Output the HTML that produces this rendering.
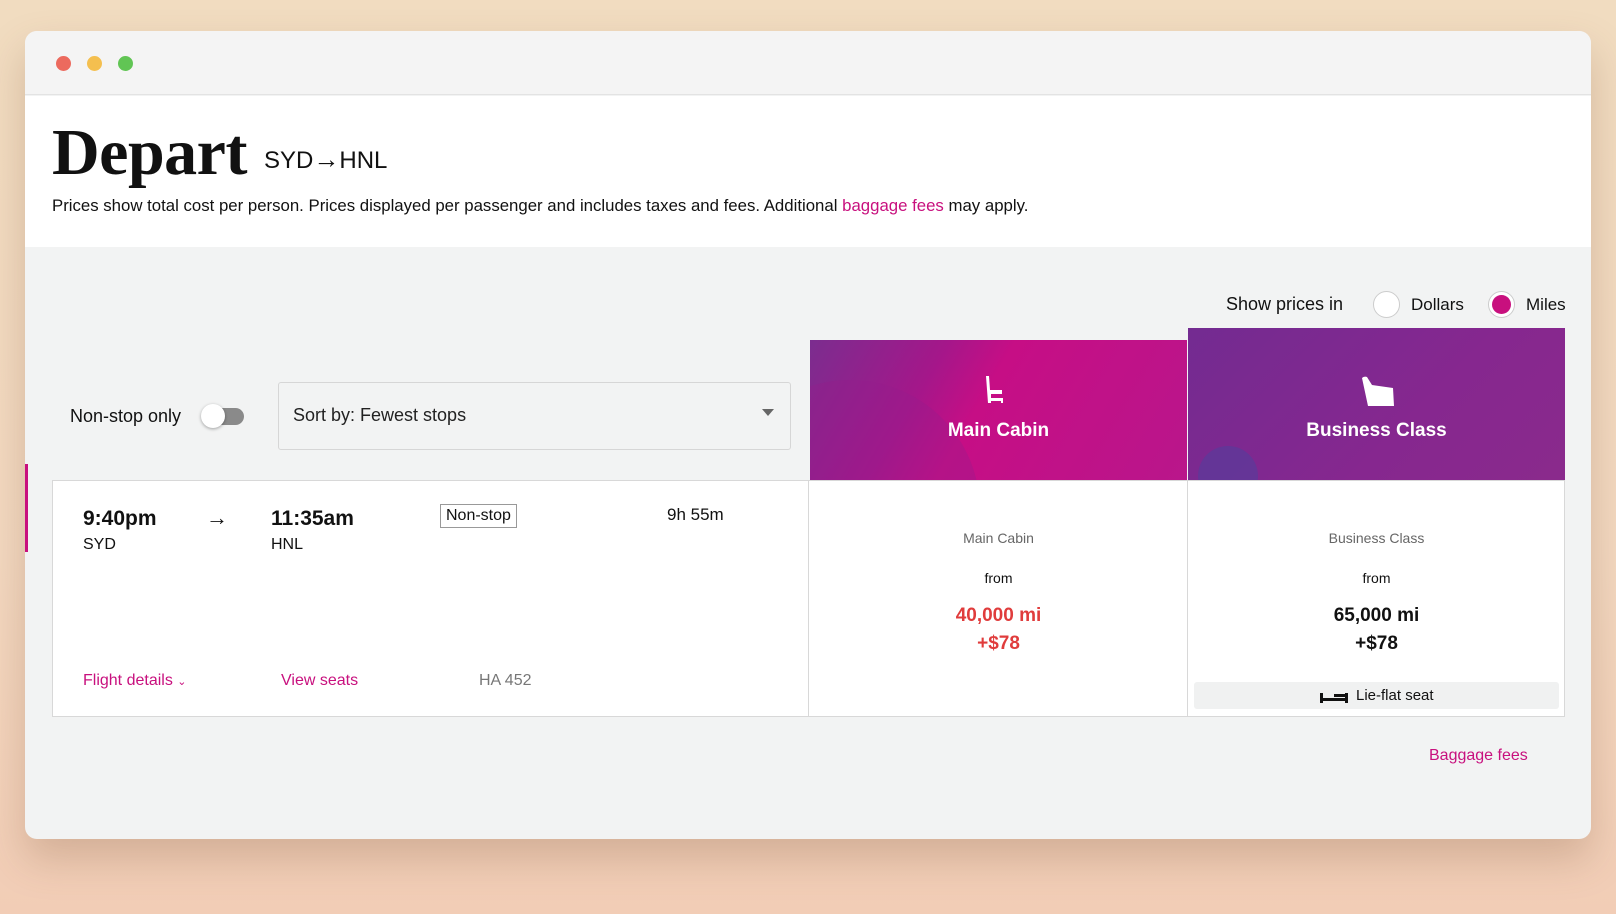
<!DOCTYPE html>
<html><head><meta charset="utf-8"><style>
*{margin:0;padding:0;box-sizing:border-box}
body{width:1616px;height:914px;overflow:hidden;position:relative;font-family:"Liberation Sans",sans-serif;color:#111;
background:linear-gradient(180deg,#f1dcc0 0%,#f3d8c0 60%,#f2cdb6 100%)}
.win{position:absolute;left:25px;top:31px;width:1566px;height:808px;border-radius:12px;background:#f2f3f3;overflow:hidden;box-shadow:0 20px 40px rgba(120,80,50,.25)}
.tb{position:absolute;left:0;top:0;width:100%;height:64px;background:#f4f4f4;border-bottom:1px solid #e3e3e3}
.dot{position:absolute;top:25px;width:15px;height:15px;border-radius:50%}
.hdr{position:absolute;left:0;top:65px;width:100%;height:151px;background:#fff}
.abs{position:absolute;white-space:nowrap}
.pink{color:#c8107e}
.radio{position:absolute;width:27px;height:27px;border-radius:50%;border:1.5px solid #ccc;background:#fff}
</style></head><body>
<div class="win">
<div class="tb">
<div class="dot" style="left:31px;background:#ec6a5e"></div>
<div class="dot" style="left:62px;background:#f4bf4f"></div>
<div class="dot" style="left:93px;background:#61c554"></div>
</div>
<div class="hdr"></div>
<div class="abs" style="left:27px;top:84px;font-family:'Liberation Serif',serif;font-size:66px;line-height:76px;font-weight:bold;letter-spacing:-0.5px">Depart</div>
<div class="abs" style="left:239px;top:113px;font-size:24px">SYD<span style="font-size:26px">→</span>HNL</div>
<div class="abs" style="left:27px;top:165px;font-size:16.8px">Prices show total cost per person. Prices displayed per passenger and includes taxes and fees. Additional <span class="pink">baggage fees</span> may apply.</div>

<div style="position:absolute;left:0;top:433px;width:3px;height:88px;background:#c8107e"></div>

<div class="abs" style="left:1201px;top:263px;font-size:18px">Show prices in</div>
<div class="radio" style="left:1348px;top:260px"></div>
<div class="abs" style="left:1386px;top:264px;font-size:17px">Dollars</div>
<div class="radio" style="left:1463px;top:260px;display:flex;align-items:center;justify-content:center"><div style="width:19px;height:19px;border-radius:50%;background:#c8107e"></div></div>
<div class="abs" style="left:1501px;top:264px;font-size:17px">Miles</div>

<div class="abs" style="left:45px;top:375px;font-size:18px">Non-stop only</div>
<div style="position:absolute;left:179px;top:377px;width:40px;height:17px;border-radius:9px;background:#8a8a8a"></div>
<div style="position:absolute;left:176px;top:373px;width:24px;height:24px;border-radius:50%;background:#fff;box-shadow:0 1px 3px rgba(0,0,0,.35)"></div>

<div style="position:absolute;left:253px;top:351px;width:513px;height:68px;border:1px solid #d6d6d6;border-radius:3px;background:#f2f3f3"></div>
<div class="abs" style="left:268px;top:374px;font-size:18px;color:#222">Sort by: Fewest stops</div>
<div style="position:absolute;left:737px;top:378px;width:0;height:0;border-left:6px solid transparent;border-right:6px solid transparent;border-top:7px solid #666"></div>

<div style="position:absolute;left:785px;top:309px;width:377px;height:140px;background:linear-gradient(120deg,#7b2d8f 0%,#a4178a 30%,#c60e85 45%,#b9168b 100%);overflow:hidden">
 <div style="position:absolute;left:-90px;top:40px;width:260px;height:260px;border-radius:50%;background:rgba(150,30,140,.35)"></div>
</div>
<svg class="abs" style="left:958px;top:345px" width="24" height="30" viewBox="0 0 24 30"><path d="M3 0 L6 0 L7 14 L19 14 L19 18 L8 18 L8 22 L20 22 L20 27 L18 27 L18 25 L8 25 L8 27 L5 27 Z" fill="#fff"/></svg>
<div class="abs" style="left:785px;width:377px;text-align:center;top:389px;font-size:19px;font-weight:bold;color:#fff">Main Cabin</div>

<div style="position:absolute;left:1163px;top:297px;width:377px;height:152px;background:linear-gradient(135deg,#732b91 0%,#86278f 60%,#8a2a8c 100%);overflow:hidden">
 <div style="position:absolute;left:10px;top:118px;width:60px;height:60px;border-radius:50%;background:#5a3a9a;opacity:.7"></div>
</div>
<svg class="abs" style="left:1335px;top:345px" width="34" height="30" viewBox="0 0 34 30"><path d="M2 2 Q4 0 7 1 L12 9 L33 12 L34 30 L8 30 Z" fill="#fff"/></svg>
<div class="abs" style="left:1163px;width:377px;text-align:center;top:389px;font-size:19px;font-weight:bold;color:#fff">Business Class</div>

<div style="position:absolute;left:27px;top:449px;width:1513px;height:237px;background:#fff;border:1px solid #d8d8d8"></div>
<div style="position:absolute;left:783px;top:449px;width:1px;height:237px;background:#d8d8d8"></div>
<div style="position:absolute;left:1162px;top:449px;width:1px;height:237px;background:#d8d8d8"></div>

<div class="abs" style="left:58px;top:476px;font-size:21px;font-weight:bold">9:40pm</div>
<div class="abs" style="left:58px;top:505px;font-size:16px">SYD</div>
<div class="abs" style="left:181px;top:474px;font-size:22px">→</div>
<div class="abs" style="left:246px;top:476px;font-size:21px;font-weight:bold">11:35am</div>
<div class="abs" style="left:246px;top:505px;font-size:16px">HNL</div>
<div class="abs" style="left:415px;top:473px;font-size:16px;border:1px solid #999;padding:2px 5px">Non-stop</div>
<div class="abs" style="left:642px;top:474px;font-size:17px">9h 55m</div>
<div class="abs pink" style="left:58px;top:641px;font-size:16px">Flight details <span style="font-size:11px">⌄</span></div>
<div class="abs pink" style="left:256px;top:641px;font-size:16px">View seats</div>
<div class="abs" style="left:454px;top:641px;font-size:16px;color:#777">HA 452</div>

<div class="abs" style="left:785px;width:377px;text-align:center;top:499px;font-size:14px;color:#666">Main Cabin</div>
<div class="abs" style="left:785px;width:377px;text-align:center;top:539px;font-size:14px">from</div>
<div class="abs" style="left:785px;width:377px;text-align:center;top:571px;font-size:19px;font-weight:bold;color:#e03c3c;line-height:28px">40,000 mi<br>+$78</div>

<div class="abs" style="left:1163px;width:377px;text-align:center;top:499px;font-size:14px;color:#666">Business Class</div>
<div class="abs" style="left:1163px;width:377px;text-align:center;top:539px;font-size:14px">from</div>
<div class="abs" style="left:1163px;width:377px;text-align:center;top:571px;font-size:19px;font-weight:bold;line-height:28px">65,000 mi<br>+$78</div>
<div style="position:absolute;left:1169px;top:651px;width:365px;height:27px;background:#f0f1f1;border-radius:3px"></div>
<svg class="abs" style="left:1295px;top:659px" width="28" height="13" viewBox="0 0 28 13"><path d="M0 3h3v5h22v-5h3v10h-3v-2H3v2H0z M14 4h11v3H14z" fill="#111"/></svg>
<div class="abs" style="left:1331px;top:656px;font-size:15px">Lie-flat seat</div>

<div class="abs pink" style="left:1404px;top:716px;font-size:16px">Baggage fees</div>
</div>
</body></html>
